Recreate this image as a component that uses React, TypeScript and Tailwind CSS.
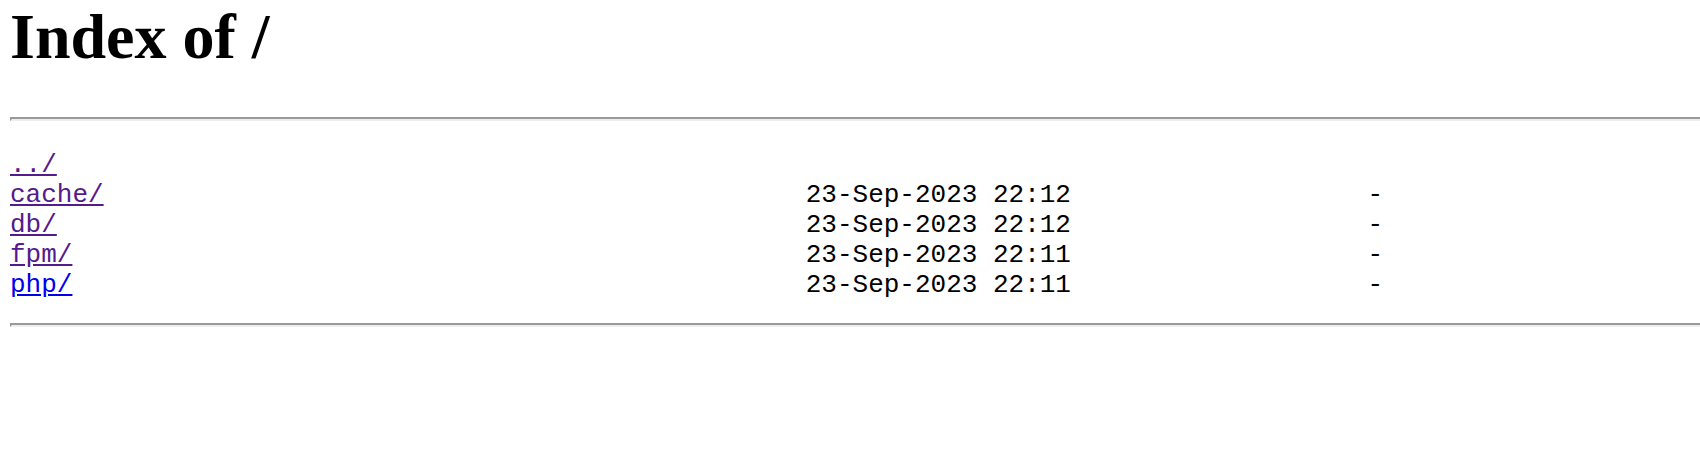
const ENTRIES = [
  { name: '../', date: '', size: '', visited: true },
  { name: 'cache/', date: '23-Sep-2023 22:12', size: '-', visited: true },
  { name: 'db/', date: '23-Sep-2023 22:12', size: '-', visited: true },
  { name: 'fpm/', date: '23-Sep-2023 22:11', size: '-', visited: true },
  { name: 'php/', date: '23-Sep-2023 22:11', size: '-', visited: false },
];

function Rule() {
  return <div className="h-0 border-t-2 border-b-2 border-l-2 border-t-[#9a9a9a] border-l-[#9a9a9a] border-b-[#eeeeee]" />;
}

export default function App() {
  return (
    <div className="bg-white min-h-[476px] pl-[10px] text-black">
      {/* Heading */}
      <h1 className="m-0 mb-[43px] text-[64px] font-bold leading-[normal] font-['Liberation_Serif','Times_New_Roman',serif]">
        Index of /
      </h1>

      <Rule />

      {/* Listing */}
      <div className="mt-[29px] mb-[23px] font-['Liberation_Mono','Courier_New',monospace] text-[26px] leading-[30px]">
        {ENTRIES.map((e) => (
          <div key={e.name} className="grid grid-cols-[51ch_18ch_19ch] whitespace-pre">
            <span>
              <a
                href="#"
                className={`underline ${e.visited ? 'text-[#551a8b]' : 'text-[#0000ee]'}`}
              >
                {e.name}
              </a>
            </span>
            <span>{e.date}</span>
            <span className="text-right">{e.size}</span>
          </div>
        ))}
      </div>

      <Rule />
    </div>
  );
}
